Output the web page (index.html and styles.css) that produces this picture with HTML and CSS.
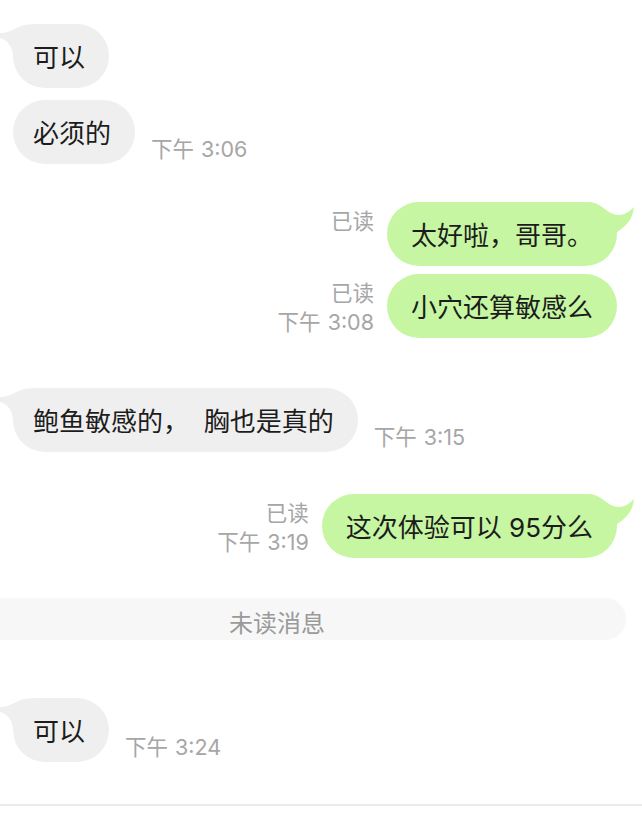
FILE: index.html
```html
<!DOCTYPE html>
<html lang="zh-CN">
<head>
    <meta charset="UTF-8">
    <title>聊天</title>
    <link rel="stylesheet" href="styles.css">
</head>
<body>
    <main class="chat">
        <section class="row in first">
            <div class="bubble">可以<svg class="tail" viewBox="0 0 46 32"><path d="M0 9 C8 10 16 3 24 1 C30 0 36 0 46 0 L46 32 L13 32 C13 24 8 16 0 14 Z"/></svg></div>
        </section>
        <section class="row in close">
            <div class="bubble">必须的</div>
            <span class="time">下午 3:06</span>
        </section>
        <section class="row out apart">
            <div class="meta"><span>已读</span></div>
            <div class="bubble">太好啦，哥哥。<svg class="tail" viewBox="0 0 46 32"><path d="M0 0 C12 0 18 13 30 13 C36 13 41 9 45 5 C44 16 38 24 28 30 L0 32 Z"/></svg></div>
        </section>
        <section class="row out tight">
            <div class="meta"><span>已读</span><span>下午 3:08</span></div>
            <div class="bubble">小穴还算敏感么</div>
        </section>
        <section class="row in far">
            <div class="bubble">鲍鱼敏感的，&nbsp; 胸也是真的<svg class="tail" viewBox="0 0 46 32"><path d="M0 9 C8 10 16 3 24 1 C30 0 36 0 46 0 L46 32 L13 32 C13 24 8 16 0 14 Z"/></svg></div>
            <span class="time">下午 3:15</span>
        </section>
        <section class="row out wide">
            <div class="meta"><span>已读</span><span>下午 3:19</span></div>
            <div class="bubble">这次体验可以 95分么<svg class="tail" viewBox="0 0 46 32"><path d="M0 0 C12 0 18 13 30 13 C36 13 41 9 45 5 C44 16 38 24 28 30 L0 32 Z"/></svg></div>
        </section>
        <div class="unread">未读消息</div>
        <section class="row in">
            <div class="bubble">可以<svg class="tail" viewBox="0 0 46 32"><path d="M0 9 C8 10 16 3 24 1 C30 0 36 0 46 0 L46 32 L13 32 C13 24 8 16 0 14 Z"/></svg></div>
            <span class="time">下午 3:24</span>
        </section>
    </main>
    <div class="bottomLine"></div>
</body>
</html>
```

FILE: styles.css
```css
body{
    margin:0;
    background:#fff;
    font-family: Inter, "Noto Sans CJK SC", sans-serif;
    color:#1c1c1c;
    overflow:hidden;
}
.chat{
    display:flex;
    flex-direction:column;
}
.row{
    display:flex;
    gap:16px;
}
.row.in{
    align-items:flex-end;
    padding-left:13px;
}
.row.out{
    justify-content:flex-end;
    align-items:flex-start;
    gap:13px;
    padding-right:25px;
}
.row.first{ margin-top:24px; }
.row.close{ margin-top:12px; }
.row.tight{ margin-top:8px; }
.row.apart{ margin-top:38px; }
.row.wide{ margin-top:42px; }
.row.far{ margin-top:50px; }

.bubble{
    position:relative;
    z-index:0;
    font-size:26px;
    line-height:36px;
    padding:16px 24px 12px 20px;
    border-radius:32px;
    background:#efefef;
    white-space:nowrap;
}
.row.out .bubble{
    background:#c6f6a2;
    padding:16px 24px 12px 24px;
}
.tail{
    position:absolute;
    z-index:-1;
    top:0;
    width:46px;
    height:32px;
}
.row.in .tail{
    left:-13px;
    fill:#efefef;
}
.row.out .tail{
    right:-18px;
    fill:#c6f6a2;
}
.time,
.meta{
    font-size:21.5px;
    line-height:29px;
    word-spacing:1px;
    color:#a6a6a6;
    white-space:nowrap;
}
.meta{
    display:flex;
    flex-direction:column;
    align-items:flex-end;
    padding-top:5px;
}
.unread{
    box-sizing:border-box;
    margin:40px 16px 58px 0;
    height:42px;
    line-height:33px;
    padding:9px 72px 0 0;
    text-align:center;
    background:#f7f7f7;
    border-radius:0 21px 21px 0;
    font-size:24px;
    color:#9a9a9a;
}
.bottomLine{
    margin-top:42px;
    height:2px;
    background:#ebebeb;
}
```
